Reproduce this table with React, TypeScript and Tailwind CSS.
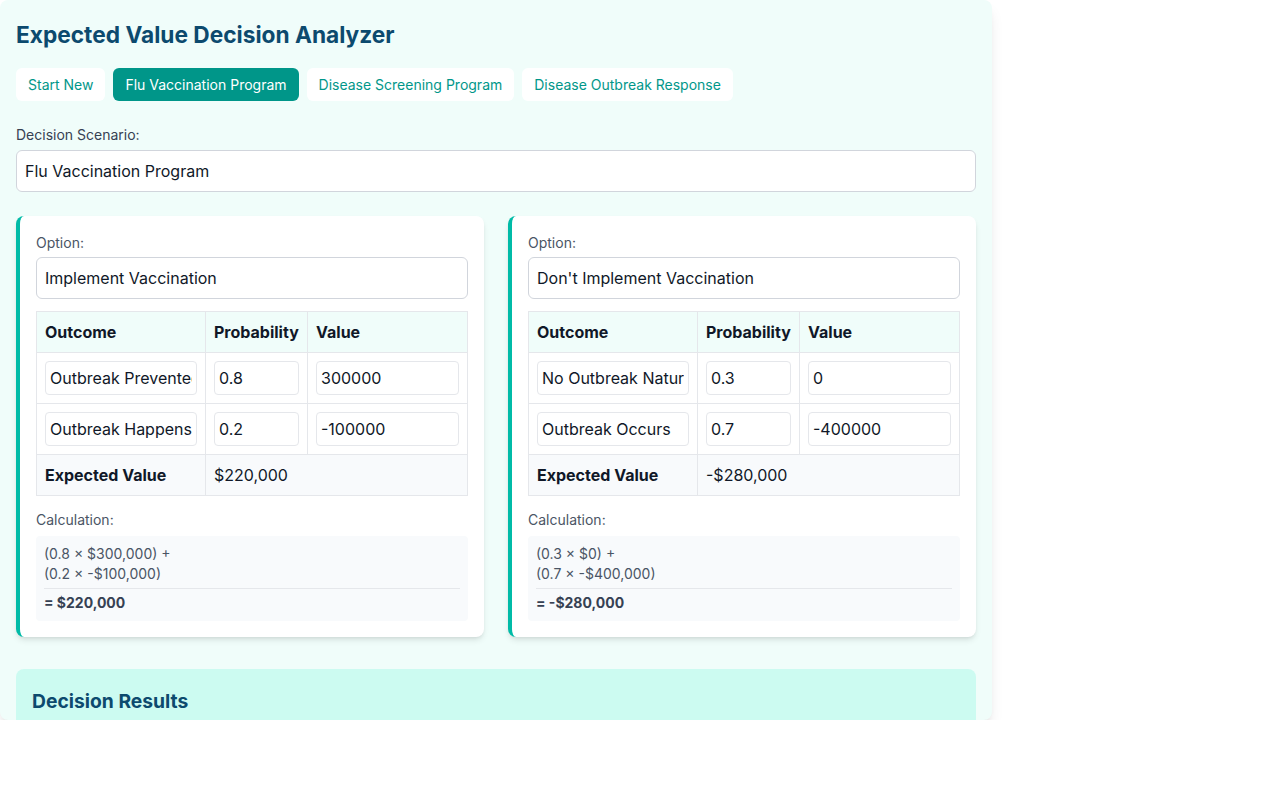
import React, { useState } from "react";

type Outcome = { name: string; probability: number; value: number };
type Option = { name: string; outcomes: Outcome[] };

const presets = ["Start New", "Flu Vaccination Program", "Disease Screening Program", "Disease Outbreak Response"];

const money = (n: number) => (n < 0 ? "-$" : "$") + Math.abs(n).toLocaleString("en-US");

function OptionCard({ option, onChange }: { option: Option; onChange: (o: Option) => void }) {
  const ev = option.outcomes.reduce((s, o) => s + o.probability * o.value, 0);

  const setOutcome = (i: number, patch: Partial<Outcome>) => {
    const outcomes = option.outcomes.map((o, j) => (j === i ? { ...o, ...patch } : o));
    onChange({ ...option, outcomes });
  };

  return (
    <div className="bg-white rounded-lg border-l-4 border-teal-500 shadow-md px-4 pt-[17px] pb-4">
      <label className="block text-sm text-gray-600 mb-1">Option:</label>
      <input
        className="w-full h-[42px] px-2 border border-gray-300 rounded-md text-base text-gray-900 outline-none"
        value={option.name}
        onChange={(e) => onChange({ ...option, name: e.target.value })}
      />
      <table className="w-full table-fixed border-collapse mt-3 text-gray-900">
        <thead>
          <tr className="bg-[#f0fdfa]">
            <th className="w-[169px] border border-gray-200 p-2 text-left font-bold">Outcome</th>
            <th className="w-[102px] border border-gray-200 p-2 text-left font-bold">Probability</th>
            <th className="border border-gray-200 p-2 text-left font-bold">Value</th>
          </tr>
        </thead>
        <tbody>
          {option.outcomes.map((o, i) => (
            <tr key={i}>
              <td className="border border-gray-200 p-2">
                <input
                  className="w-full h-[34px] px-1 border border-gray-200 rounded outline-none"
                  value={o.name}
                  onChange={(e) => setOutcome(i, { name: e.target.value })}
                />
              </td>
              <td className="border border-gray-200 p-2">
                <input
                  className="w-full h-[34px] px-1 border border-gray-200 rounded outline-none"
                  value={o.probability}
                  onChange={(e) => setOutcome(i, { probability: Number(e.target.value) || 0 })}
                />
              </td>
              <td className="border border-gray-200 p-2">
                <input
                  className="w-full h-[34px] px-1 border border-gray-200 rounded outline-none"
                  value={o.value}
                  onChange={(e) => setOutcome(i, { value: Number(e.target.value) || 0 })}
                />
              </td>
            </tr>
          ))}
          <tr className="bg-[#f8fafc]">
            <td className="border border-gray-200 p-2 font-bold">Expected Value</td>
            <td colSpan={2} className="border border-gray-200 p-2">
              {money(ev)}
            </td>
          </tr>
        </tbody>
      </table>
      <div className="mt-[14px] text-sm text-gray-600 mb-1.5">Calculation:</div>
      <div className="bg-[#f8fafc] rounded p-2 text-sm text-gray-600">
        {option.outcomes.map((o, i) => (
          <div key={i}>
            ({o.probability} × {money(o.value)}){i < option.outcomes.length - 1 ? " +" : ""}
          </div>
        ))}
        <div className="mt-1 pt-1 border-t border-gray-200 font-bold text-gray-700">= {money(ev)}</div>
      </div>
    </div>
  );
}

export default function App() {
  const [active, setActive] = useState(1);
  const [scenario, setScenario] = useState("Flu Vaccination Program");
  const [options, setOptions] = useState<Option[]>([
    {
      name: "Implement Vaccination",
      outcomes: [
        { name: "Outbreak Prevented", probability: 0.8, value: 300000 },
        { name: "Outbreak Happens Anyway", probability: 0.2, value: -100000 },
      ],
    },
    {
      name: "Don't Implement Vaccination",
      outcomes: [
        { name: "No Outbreak Naturally", probability: 0.3, value: 0 },
        { name: "Outbreak Occurs", probability: 0.7, value: -400000 },
      ],
    },
  ]);

  return (
    <div className="font-['Inter',sans-serif]">
      <div className="w-[992px] h-[720px] overflow-hidden bg-[#f0fdfa] rounded-lg shadow-lg px-4 pt-[19px]">
        <h1 className="text-[22.7px] leading-8 font-bold text-[#0c4a6e] mb-[17px]">Expected Value Decision Analyzer</h1>

        <div className="flex gap-2 mb-6">
          {presets.map((p, i) => (
            <button
              key={p}
              onClick={() => setActive(i)}
              className={
                i === active
                  ? "h-[33px] px-3 rounded-md text-sm bg-teal-600 text-white"
                  : "h-[33px] px-3 rounded-md text-sm bg-white text-teal-600"
              }
            >
              {p}
            </button>
          ))}
        </div>

        <label className="block text-sm text-gray-700 mb-[5px]">Decision Scenario:</label>
        <input
          className="w-full h-[42px] px-2 border border-gray-300 rounded-md bg-white text-base text-gray-900 outline-none"
          value={scenario}
          onChange={(e) => setScenario(e.target.value)}
        />

        <div className="grid grid-cols-2 gap-6 mt-[24px]">
          {options.map((o, i) => (
            <OptionCard
              key={i}
              option={o}
              onChange={(n) => setOptions(options.map((x, j) => (j === i ? n : x)))}
            />
          ))}
        </div>

        <div className="mt-8 bg-[#ccfbf1] rounded-lg px-4 pt-[18px] pb-4">
          <h2 className="text-[19.3px] leading-7 font-bold text-[#0c4a6e]">Decision Results</h2>
        </div>
      </div>
    </div>
  );
}
